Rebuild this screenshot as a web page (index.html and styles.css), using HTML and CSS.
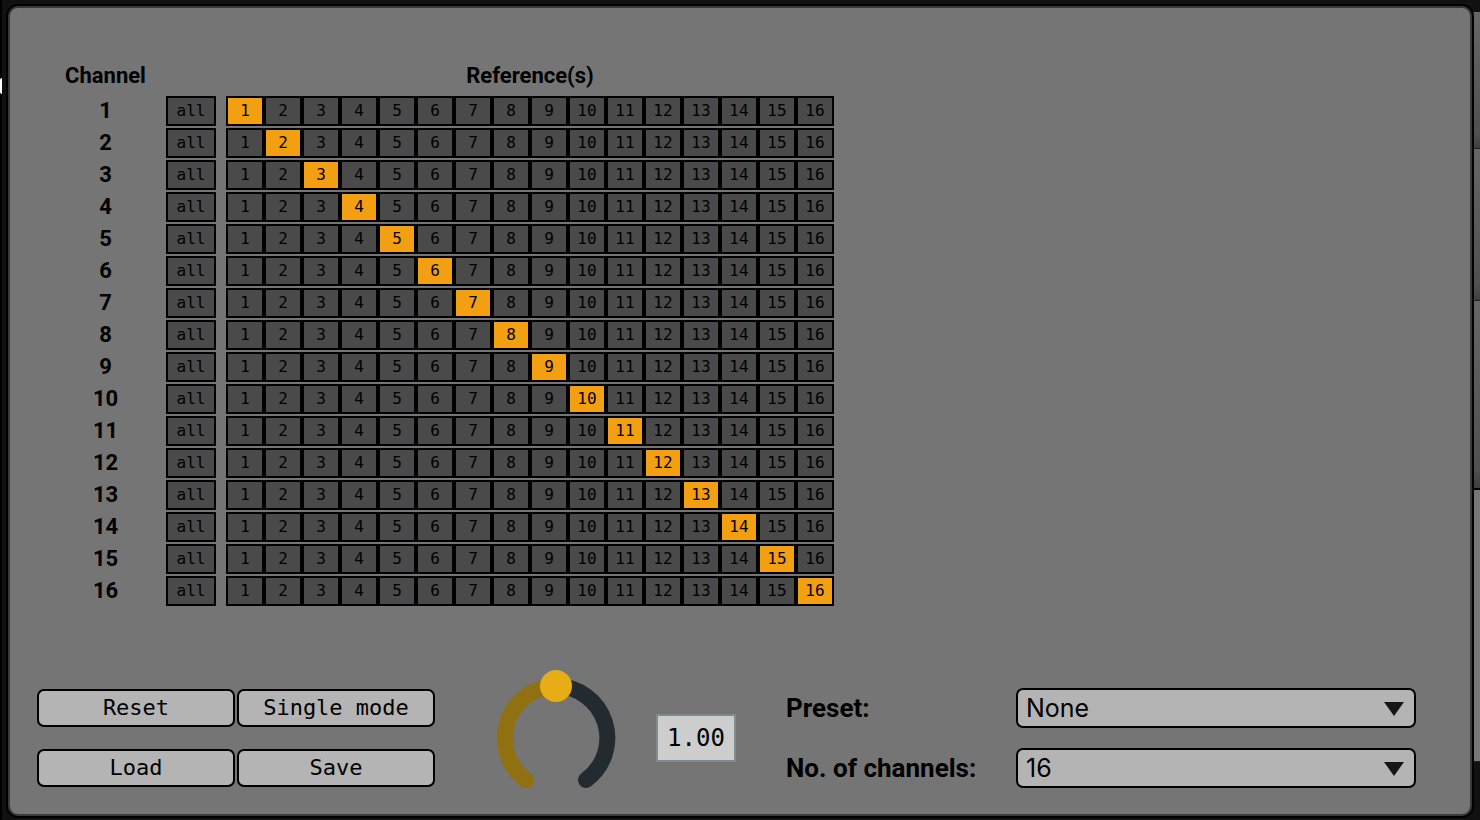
FILE: index.html
```html
<!DOCTYPE html>
<html lang="en">
<head>
<meta charset="utf-8">
<title>Channel references</title>
<link rel="stylesheet" href="styles.css">
</head>
<body>
<div class="backdrop" aria-hidden="true">
  <span class="backdrop-edge"></span>
  <span class="backdrop-light"></span>
  <span class="backdrop-strip"><span class="shade short"></span><span class="shade"></span><span class="shade long"></span><span class="shade tall"></span></span>
</div>
<main class="panel">
  <table class="matrix">
    <thead>
      <tr><th class="channel" scope="col">Channel</th><td></td><th class="references" scope="colgroup" colspan="16">Reference(s)</th></tr>
    </thead>
    <tbody id="rows"></tbody>
  </table>
  <footer class="controls">
    <div class="actions">
      <button class="action" type="button">Reset</button>
      <button class="action" type="button">Single mode</button>
      <button class="action" type="button">Load</button>
      <button class="action" type="button">Save</button>
    </div>
    <div class="knob">
      <svg class="dial" viewBox="0 0 120 118" aria-hidden="true">
        <path d="M90 110A52 52 0 0 0 60 16" fill="none" stroke="#232b31" stroke-width="16" stroke-linecap="round"/>
        <path d="M30 110A52 52 0 0 1 60 16" fill="none" stroke="#917011" stroke-width="16" stroke-linecap="round"/>
        <circle cx="60" cy="16" r="16" fill="#e6ad14"/>
      </svg>
      <input class="knob-input" type="range" min="0" max="2" step="0.01" value="1" aria-label="Level">
    </div>
    <input class="value" type="text" value="1.00" aria-label="Level value">
    <div class="settings">
      <label class="label" for="preset">Preset:</label>
      <div class="picker"><select class="select" id="preset"><option>None</option></select></div>
      <label class="label" for="count">No. of channels:</label>
      <div class="picker"><select class="select" id="count"><option>16</option></select></div>
    </div>
  </footer>
</main>
<script src="script.js"></script>
</body>
</html>
```

FILE: styles.css
```css
* { box-sizing: border-box; }

body {
  display: flex;
  min-height: 100vh;
  margin: 0;
  padding: 6px 8px 4px;
  background: #111;
  color: #000;
  font-family: Roboto, sans-serif;
}

.backdrop {
  position: absolute;
  inset: 0;
  overflow: hidden;
}

.backdrop-edge {
  position: absolute;
  inset: 0 auto 0 0;
  width: 2px;
  background: #000;
}

.backdrop-light {
  position: absolute;
  top: 78px;
  left: 0;
  width: 2px;
  height: 16px;
  border-radius: 2px 0 0 2px;
  background: #fff;
}

.backdrop-strip {
  position: absolute;
  top: 12px;
  right: 0;
  display: flex;
  flex-direction: column;
  width: 12px;
}

.shade {
  height: 152px;
  border-bottom: 1px solid #222;
  background: linear-gradient(#666, #505050 90%, #3f3f3f);
}

.shade.short { height: 137px; }
.shade.long { height: 189px; border-bottom: 2px solid #000; }
.shade.tall { height: 272px; background: #777; }

.panel {
  position: relative;
  display: flex;
  flex: 1;
  flex-direction: column;
  justify-content: space-between;
  padding: 54px 54px 26px 27px;
  border: 2px solid #3a3a3a;
  border-radius: 10px;
  background: #757575;
  box-shadow: 0 0 0 2px #000;
}

.matrix {
  align-self: flex-start;
  border-spacing: 0 2px;
}

.matrix th, .matrix td { padding: 0; }
.matrix th { font-size: 22px; font-weight: 700; line-height: 24px; }
.matrix thead th { padding-bottom: 6px; }
.matrix th:first-child { padding-left: 8px; }
.channel { width: 129px; }
.matrix td.all { padding-right: 10px; }

.cell {
  display: block;
  width: 38px;
  height: 30px;
  padding: 0;
  border: 2px solid #000;
  border-radius: 0;
  background: #4a4a4a;
  color: #000;
  font: 16px/24px "DejaVu Sans Mono", monospace;
}

.cell.wide { width: 50px; }
.cell[aria-pressed="true"] { background: #f39f12; }

.controls {
  display: flex;
  align-items: center;
}

.actions {
  display: grid;
  grid-template-columns: 198px 198px;
  gap: 22px 2px;
}

.action {
  height: 38px;
  padding: 0;
  border: 2px solid #000;
  border-radius: 7px;
  background: #b4b4b4;
  color: #000;
  font: 22px/32px "DejaVu Sans Mono", monospace;
}

.knob {
  position: relative;
  width: 120px;
  height: 118px;
  margin: -18px 40px 0 61px;
}

.dial { display: block; width: 100%; }

.knob-input {
  position: absolute;
  inset: 0;
  width: 100%;
  height: 100%;
  margin: 0;
  opacity: 0;
}

.value {
  width: 80px;
  height: 48px;
  margin-right: 50px;
  padding: 0;
  border: 2px solid #7f8c8d;
  background: #cdcdcd;
  color: #000;
  font: 24px/44px "DejaVu Sans Mono", monospace;
  text-align: center;
}

.settings {
  display: grid;
  flex: 1;
  grid-template-columns: 230px 1fr;
  gap: 20px 0;
  align-items: center;
}

.label { font-size: 26px; font-weight: 700; line-height: 40px; }
.picker { position: relative; }

.picker::after {
  position: absolute;
  top: 14px;
  right: 12px;
  width: 20px;
  height: 14px;
  background: #161616;
  clip-path: polygon(0 0, 100% 0, 50% 100%);
  content: "";
  pointer-events: none;
}

.select {
  display: block;
  width: 100%;
  height: 40px;
  padding: 0 40px 0 8px;
  border: 2px solid #000;
  border-radius: 7px;
  appearance: none;
  background: #b4b4b4;
  color: #000;
  font: 25px/36px Inter, sans-serif;
}
```

FILE: script.js
```js
const CHANNELS = 16;
const rows = document.getElementById("rows");

function makeCell(text, label, pressed) {
  const td = document.createElement("td");
  const button = document.createElement("button");
  button.type = "button";
  button.className = "cell";
  button.textContent = text;
  button.setAttribute("aria-label", label);
  button.setAttribute("aria-pressed", String(pressed));
  td.append(button);
  return td;
}

for (let channel = 1; channel <= CHANNELS; channel++) {
  const row = document.createElement("tr");
  const head = document.createElement("th");
  head.scope = "row";
  head.textContent = channel;
  const all = makeCell("all", `Channel ${channel}: all`, false);
  all.className = "all";
  all.firstChild.classList.add("wide");
  row.append(head, all);
  for (let ref = 1; ref <= CHANNELS; ref++) {
    row.append(makeCell(ref, `Channel ${channel}: reference ${ref}`, ref === channel));
  }
  rows.append(row);
}
```
